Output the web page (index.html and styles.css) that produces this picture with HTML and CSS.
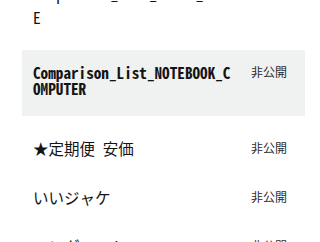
FILE: index.html
```html
<!DOCTYPE html>
<html lang="ja">
<head>
<meta charset="utf-8">
<link rel="stylesheet" href="styles.css">
</head>
<body>
<ul class="list">
  <li class="item"><span class="title">Comparison_List_INPUT_MOUSE</span><span class="badge">非公開</span></li>
  <li class="item selected"><span class="title">Comparison_List_NOTEBOOK_COMPUTER</span><span class="badge">非公開</span></li>
  <li class="item"><span class="title">★定期便 安価</span><span class="badge">非公開</span></li>
  <li class="item"><span class="title">いいジャケ</span><span class="badge">非公開</span></li>
  <li class="item"><span class="title">ロングコート</span><span class="badge">非公開</span></li>
</ul>
</body>
</html>
```
FILE: styles.css
```css
html, body {
  margin: 0;
  padding: 0;
  background: #ffffff;
}
body {
  width: 320px;
  height: 242px;
  overflow: hidden;
  font-family: "Noto Sans Mono CJK JP", "Noto Sans CJK JP", "DejaVu Sans Mono", monospace;
  color: #141414;
}
.list {
  list-style: none;
  margin: -31px 15px 0 22px;
  padding: 0;
  display: flex;
  flex-direction: column;
}
.item {
  display: flex;
  align-items: flex-start;
  padding: 12px 18px 13px 11px;
  font-size: 15.5px;
  line-height: 24px;
}
.title {
  width: 205px;
  word-break: break-all;
}
.badge {
  margin-left: auto;
  font-family: "Noto Sans CJK JP", sans-serif;
  font-size: 12px;
  font-weight: normal;
  color: #2a2a2a;
}
.selected {
  background: #f0f1f1;
  margin: 8px 0;
  padding: 14px 18px 20px 11px;
  font-size: 15.2px;
  line-height: 16px;
  font-weight: bold;
}
```
